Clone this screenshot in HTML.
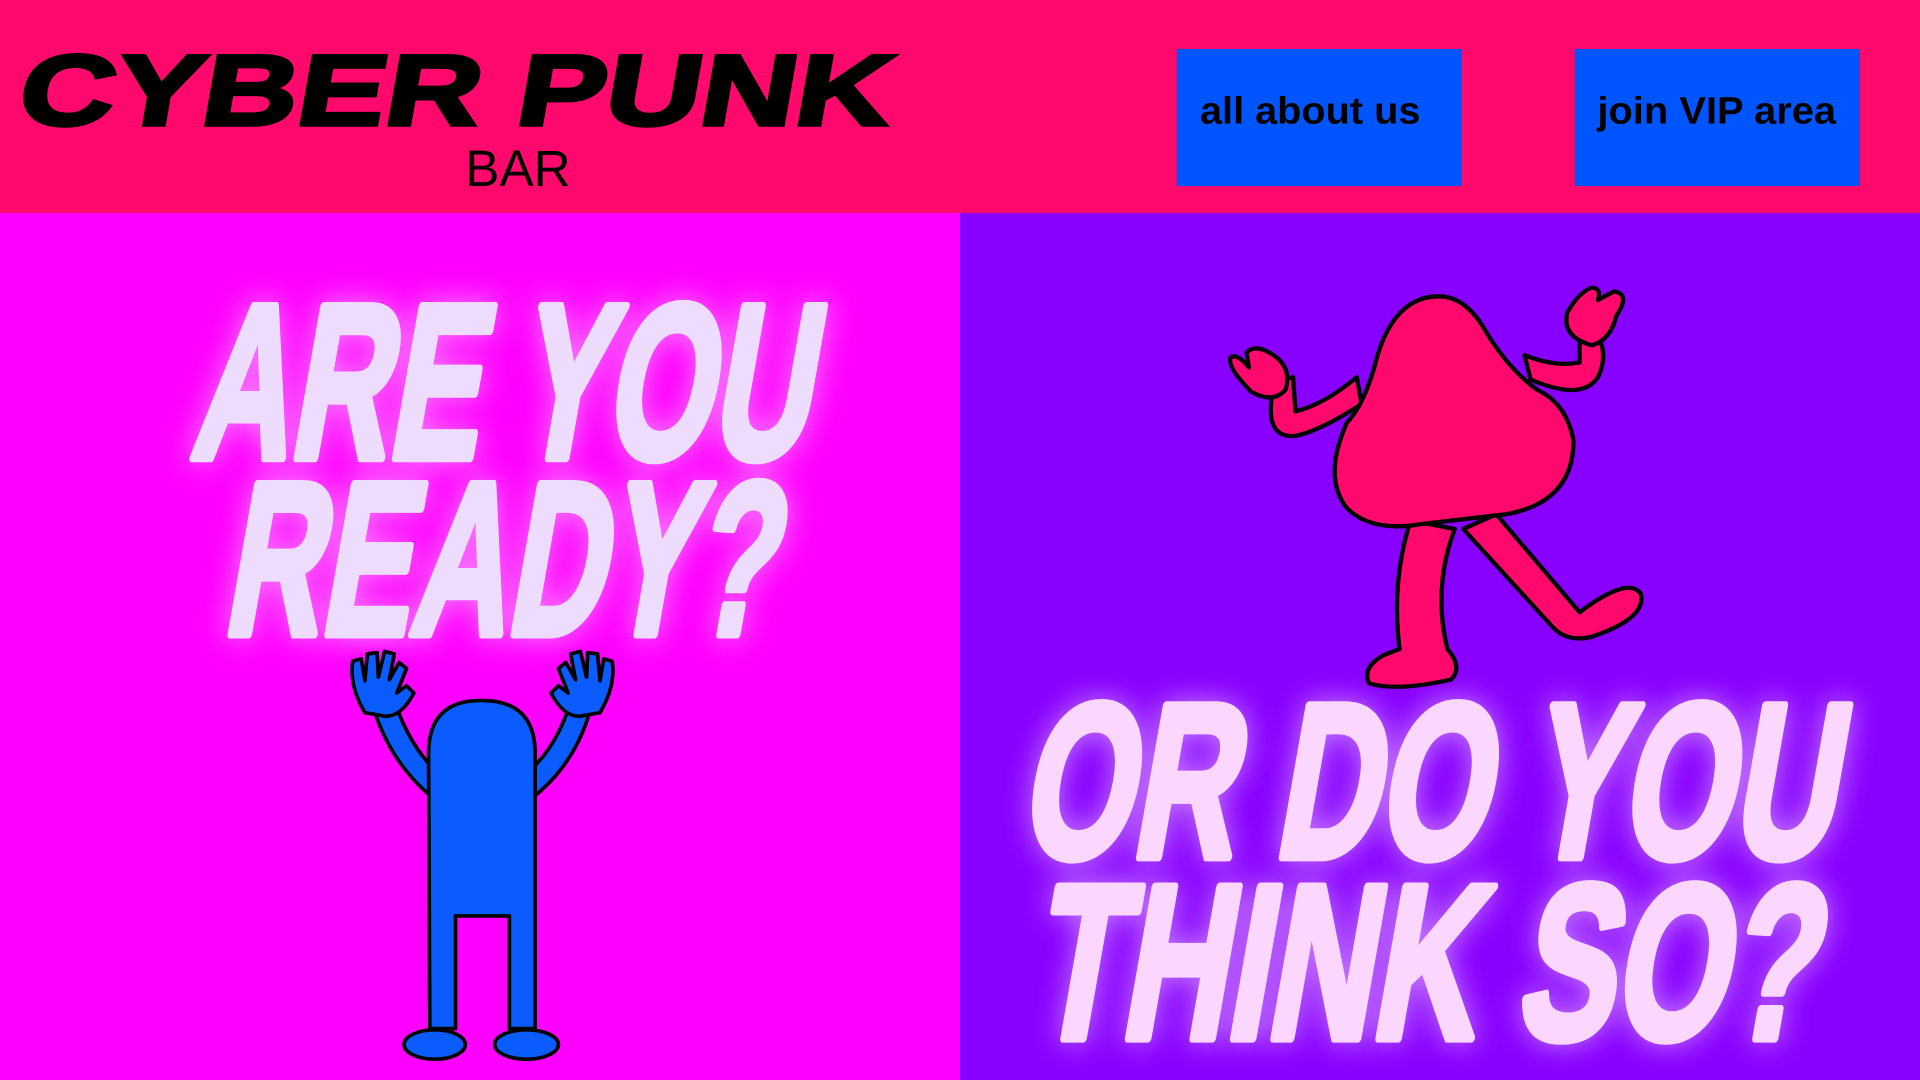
<!DOCTYPE html>
<html><head><meta charset="utf-8"><style>
html,body{margin:0;padding:0;width:1920px;height:1080px;overflow:hidden;background:#ff0a6c}
svg{display:block}
</style></head><body>
<svg width="1920" height="1080" viewBox="0 0 1568 882" xmlns="http://www.w3.org/2000/svg">
<defs>
<filter id="glow" x="-20%" y="-20%" width="140%" height="140%">
<feGaussianBlur in="SourceAlpha" stdDeviation="12" result="b"/>
<feFlood flood-color="#f4d8ff" flood-opacity="0.6"/>
<feComposite in2="b" operator="in" result="g"/>
<feMerge><feMergeNode in="g"/><feMergeNode in="SourceGraphic"/></feMerge>
</filter>
</defs>
<rect x="0" y="0" width="1568" height="174" fill="#ff0a6c"/>
<rect x="0" y="174" width="784" height="708" fill="#ff00ff"/>
<rect x="784" y="174" width="784" height="708" fill="#8800ff"/>
<g transform="skewX(-10)">
<text x="30" y="102" font-family="Liberation Sans Narrow, Liberation Sans, sans-serif" font-weight="bold" font-size="82" textLength="712" lengthAdjust="spacingAndGlyphs" fill="#000" stroke="#000" stroke-width="3">CYBER PUNK</text>
</g>
<text x="423" y="152" text-anchor="middle" font-family="Liberation Sans, sans-serif" font-size="42" fill="#000" textLength="86" lengthAdjust="spacingAndGlyphs">BAR</text>
<rect x="961" y="40" width="233" height="112" fill="#0055ff"/>
<rect x="1286" y="40" width="233" height="112" fill="#0055ff"/>
<text x="1070" y="101" text-anchor="middle" font-family="Liberation Sans, sans-serif" font-weight="bold" font-size="31" textLength="180" lengthAdjust="spacingAndGlyphs" fill="#000">all about us</text>
<text x="1402" y="101" text-anchor="middle" font-family="Liberation Sans, sans-serif" font-weight="bold" font-size="31" textLength="195" lengthAdjust="spacingAndGlyphs" fill="#000">join VIP area</text>

<g filter="url(#glow)" font-family="Liberation Sans Narrow, Liberation Sans, sans-serif" font-weight="bold" fill="#eedcff" stroke="#eedcff" stroke-width="7" stroke-linejoin="round">
<g transform="skewX(-10)">
<text x="220" y="374" font-size="180" textLength="505" lengthAdjust="spacingAndGlyphs">ARE YOU</text>
<text x="272" y="518" font-size="178" textLength="450" lengthAdjust="spacingAndGlyphs">READY?</text>
</g>
</g>
<g filter="url(#glow)" font-family="Liberation Sans Narrow, Liberation Sans, sans-serif" font-weight="bold" fill="#fbd6ff" stroke="#fbd6ff" stroke-width="7" stroke-linejoin="round">
<g transform="skewX(-10)">
<text x="955" y="700" font-size="180" textLength="665" lengthAdjust="spacingAndGlyphs">OR DO YOU</text>
<text x="990" y="848" font-size="180" textLength="640" lengthAdjust="spacingAndGlyphs">THINK SO?</text>
</g>
</g>

<!-- blue figure -->
<g fill="#0a5cff" stroke="#000" stroke-width="3" stroke-linejoin="round" stroke-linecap="round">
<path d="M358 655 Q318 625 303 572 L320 566 Q334 612 362 635 Z"/>
<path d="M430 655 Q472 625 484 572 L468 566 Q456 612 426 635 Z"/>
<path d="M298 582 Q285 560 288 540 L295 538 L298 556 L300 534 L308 533 L309 553 L314 532 L322 534 L318 555 L326 541 L332 546 L324 566 L332 560 L338 566 Q328 585 315 585 Z"/>
<path d="M490 582 Q503 560 500 540 L493 538 L490 556 L488 534 L480 533 L479 553 L474 532 L466 534 L470 555 L462 541 L456 546 L464 566 L456 560 L450 566 Q460 585 473 585 Z"/>
<path d="M350 615 Q350 572 393 572 Q437 572 437 615 L437 840 L416 840 L416 748 L372 748 L372 840 L351 840 Z"/>
<ellipse cx="355" cy="853" rx="25" ry="12"/>
<ellipse cx="430" cy="853" rx="26" ry="12"/>
</g>

<!-- pink figure -->
<g fill="#ff0a6c" stroke="#000" stroke-width="3.5" stroke-linejoin="round" stroke-linecap="round">
<path d="M1112 330 Q1078 352 1058 356 Q1036 358 1038 330 L1040 312 L1056 308 L1058 336 Q1082 330 1108 308 Z"/>
<path d="M1250 310 Q1292 328 1305 308 Q1314 290 1304 272 L1290 274 L1290 296 Q1270 300 1245 290 Z"/>
<path d="M1022 320 Q1002 300 1005 292 Q1010 288 1020 300 L1018 288 Q1025 280 1040 290 Q1055 300 1050 318 Q1040 330 1022 320 Z"/>
<path d="M1300 282 Q1275 275 1280 255 Q1290 238 1300 235 Q1308 235 1305 245 L1318 238 Q1332 240 1320 258 Q1315 278 1300 282 Z"/>
<path d="M1152 425 Q1136 475 1143 530 L1130 535 Q1112 545 1118 558 Q1140 565 1185 555 Q1195 545 1182 530 Q1170 480 1188 432 Z"/>
<path d="M1222 420 L1290 500 Q1330 470 1340 485 Q1345 505 1300 520 Q1280 525 1268 512 L1195 432 Z"/>
<path d="M1175 242 Q1140 242 1125 290 Q1115 330 1100 345 Q1080 390 1100 415 Q1120 435 1160 428 L1230 420 Q1285 410 1285 360 Q1280 330 1255 318 Q1230 300 1210 265 Q1195 242 1175 242 Z"/>
</g>
</svg>
</body></html>
